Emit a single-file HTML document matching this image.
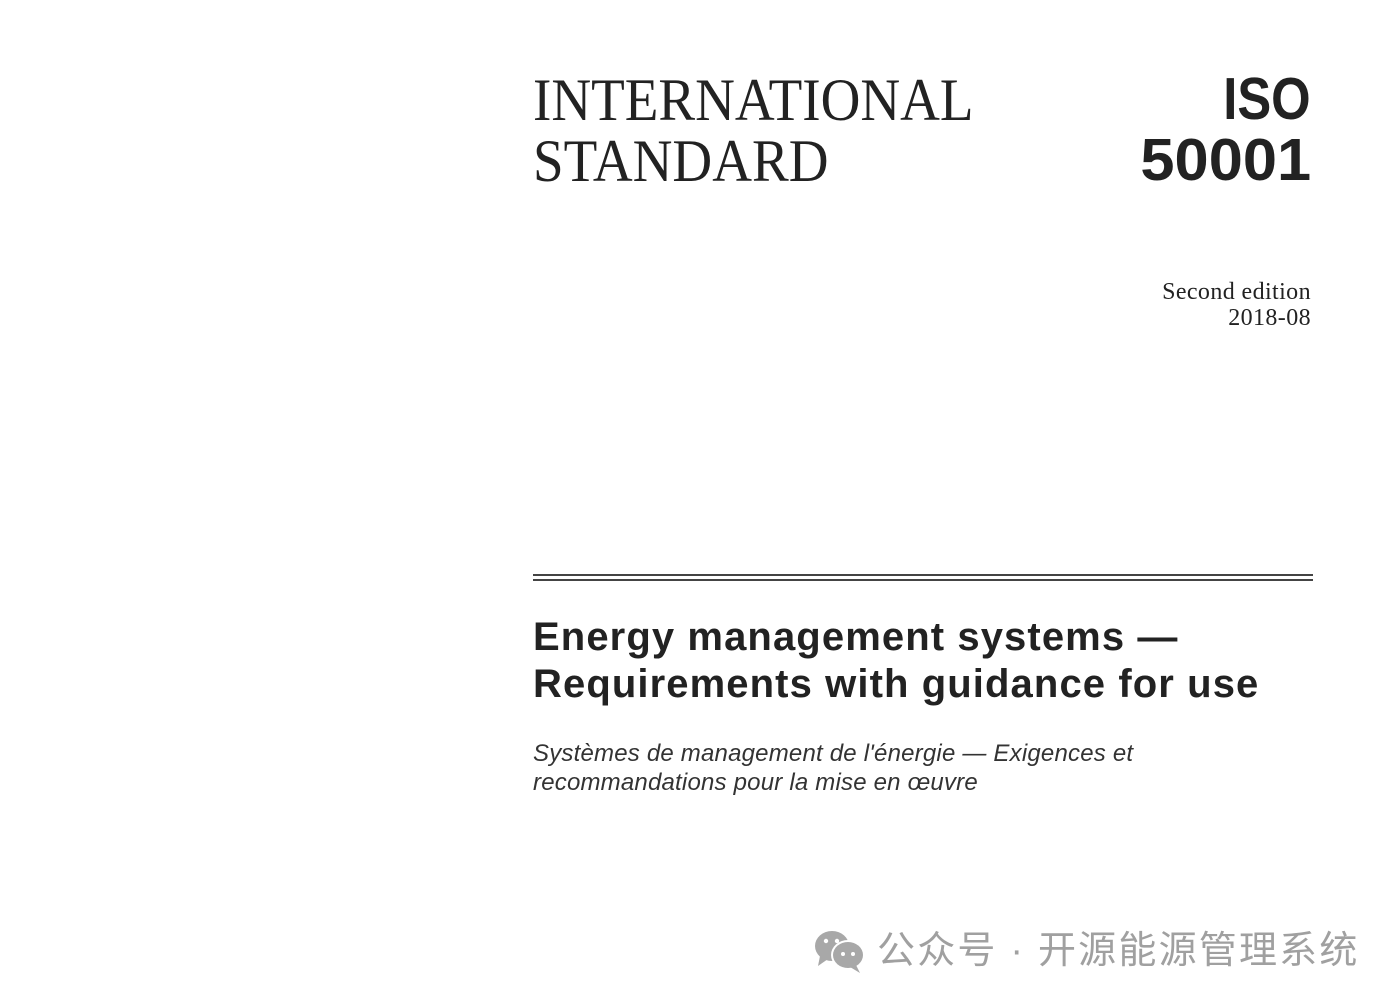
<!DOCTYPE html>
<html><head><meta charset="utf-8"><style>
body{margin:0;width:1400px;height:1005px;background:#fff;position:relative;overflow:hidden;font-family:"Liberation Sans",sans-serif;color:#222}
.a{position:absolute;white-space:nowrap}
</style></head><body>
<div class="a" style="left:533px;top:70px;font-family:'Liberation Serif',serif;font-size:60px;line-height:61px;color:#222;transform:scaleX(0.918);transform-origin:left top">INTERNATIONAL<br>STANDARD</div>
<div class="a" style="right:89px;top:69px;font-weight:bold;font-size:59px;line-height:61px;text-align:right;color:#222"><span style="display:inline-block;transform:scaleX(0.86);transform-origin:right">ISO</span><br><span style="display:inline-block;transform:scaleX(1.04);transform-origin:right">50001</span></div>
<div class="a" style="right:89px;top:279px;font-family:'Liberation Serif',serif;font-size:24px;line-height:26px;text-align:right;color:#222;letter-spacing:0.4px">Second edition<br>2018-08</div>
<div class="a" style="left:533px;top:574px;width:780px;height:2px;background:#444"></div>
<div class="a" style="left:533px;top:579px;width:780px;height:2px;background:#444"></div>
<div class="a" style="left:533px;top:614px;font-weight:bold;font-size:40px;line-height:47px;color:#222;letter-spacing:1.1px">Energy management systems —<br>Requirements with guidance for use</div>
<div class="a" style="left:533px;top:739px;font-style:italic;font-size:24px;line-height:29px;color:#333;letter-spacing:0.2px">Systèmes de management de l'énergie — Exigences et<br>recommandations pour la mise en œuvre</div>
<svg class="a" style="left:812px;top:928px" width="56" height="46" viewBox="0 0 56 46">
<ellipse cx="20" cy="18" rx="17" ry="15" fill="#a8a8a8"/><path d="M8 28 L6 38 L16 31Z" fill="#a8a8a8"/>
<ellipse cx="36" cy="27" rx="17" ry="15" fill="#fff"/>
<ellipse cx="36" cy="27" rx="15" ry="13" fill="#a8a8a8"/><path d="M44 37 L48 45 L38 39Z" fill="#a8a8a8"/>
<circle cx="14" cy="13" r="2.2" fill="#fff"/><circle cx="25" cy="13" r="2.2" fill="#fff"/>
<circle cx="31" cy="26" r="2" fill="#fff"/><circle cx="41" cy="26" r="2" fill="#fff"/></svg>
<div class="a" style="left:877px;top:928px;font-family:'Liberation Sans','Noto Sans CJK SC',sans-serif;font-size:38px;line-height:46px;color:#a0a0a0;letter-spacing:2.2px">公众号 · 开源能源管理系统</div>
</body></html>
